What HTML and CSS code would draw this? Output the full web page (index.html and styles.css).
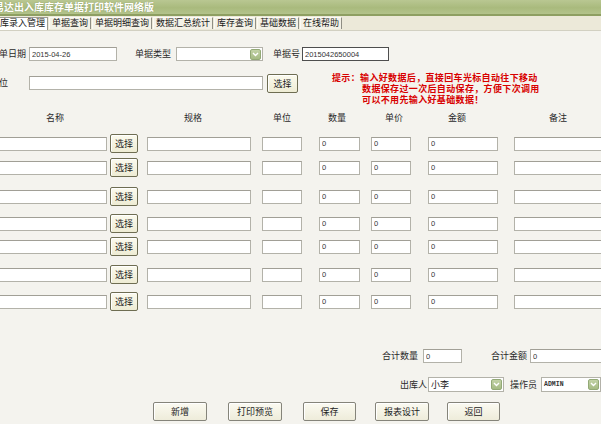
FILE: index.html
```html
<!DOCTYPE html>
<html lang="zh-CN">
<head>
<meta charset="utf-8">
<title>易达出入库库存单据打印软件网络版</title>
<link rel="stylesheet" href="styles.css">
</head>
<body>
<div class="page">
  <div class="titlebar"><span class="title">易达出入库库存单据打印软件网络版</span></div>
  <div class="tabs">
    <span class="tab active">出库录入管理</span>
    <span class="tab">单据查询</span>
    <span class="tab">单据明细查询</span>
    <span class="tab">数据汇总统计</span>
    <span class="tab">库存查询</span>
    <span class="tab">基础数据</span>
    <span class="tab">在线帮助</span>
  </div>

  <div class="content">
    <div class="row-a">
      <span class="lbl lbl-first">开单日期</span>
      <input class="field f-date" type="text" value="2015-04-26">
      <span class="lbl lbl-type">单据类型</span>
      <div class="select s-type"><span class="sel-text"></span><span class="sel-btn"><svg width="7" height="5" viewBox="0 0 7 5"><path d="M1 1 L3.5 3.5 L6 1" stroke="#fff" stroke-width="1.4" fill="none"/></svg></span></div>
      <span class="lbl lbl-no">单据号</span>
      <input class="field f-no" type="text" value="2015042650004">
    </div>

    <div class="row-b">
      <span class="lbl lbl-first lbl-unit">单位</span>
      <input class="field f-unit" type="text" value="">
      <button class="pick pick-top">选择</button>
      <div class="tip">
        <span class="tip-head">提示：</span>
        <div class="tip-lines">
          <div>输入好数据后，直接回车光标自动往下移动</div>
          <div>数据保存过一次后自动保存，方便下次调用</div>
          <div>可以不用先输入好基础数据！</div>
        </div>
      </div>
    </div>

    <div class="grid-head">
      <span class="h h-name">名称</span>
      <span class="h h-spec">规格</span>
      <span class="h h-unit">单位</span>
      <span class="h h-qty">数量</span>
      <span class="h h-price">单价</span>
      <span class="h h-amt">金额</span>
      <span class="h h-note">备注</span>
    </div>

    <div class="items">
      <div class="item"><input class="field c-name"><button class="pick">选择</button><input class="field c-spec"><input class="field c-unit"><input class="field c-qty" value="0"><input class="field c-price" value="0"><input class="field c-amt" value="0"><input class="field c-note"></div>
      <div class="item"><input class="field c-name"><button class="pick">选择</button><input class="field c-spec"><input class="field c-unit"><input class="field c-qty" value="0"><input class="field c-price" value="0"><input class="field c-amt" value="0"><input class="field c-note"></div>
      <div class="item"><input class="field c-name"><button class="pick">选择</button><input class="field c-spec"><input class="field c-unit"><input class="field c-qty" value="0"><input class="field c-price" value="0"><input class="field c-amt" value="0"><input class="field c-note"></div>
      <div class="item"><input class="field c-name"><button class="pick">选择</button><input class="field c-spec"><input class="field c-unit"><input class="field c-qty" value="0"><input class="field c-price" value="0"><input class="field c-amt" value="0"><input class="field c-note"></div>
      <div class="item"><input class="field c-name"><button class="pick">选择</button><input class="field c-spec"><input class="field c-unit"><input class="field c-qty" value="0"><input class="field c-price" value="0"><input class="field c-amt" value="0"><input class="field c-note"></div>
      <div class="item"><input class="field c-name"><button class="pick">选择</button><input class="field c-spec"><input class="field c-unit"><input class="field c-qty" value="0"><input class="field c-price" value="0"><input class="field c-amt" value="0"><input class="field c-note"></div>
      <div class="item"><input class="field c-name"><button class="pick">选择</button><input class="field c-spec"><input class="field c-unit"><input class="field c-qty" value="0"><input class="field c-price" value="0"><input class="field c-amt" value="0"><input class="field c-note"></div>
    </div>

    <div class="totals">
      <span class="lbl">合计数量</span>
      <input class="field t-qty" value="0">
      <span class="lbl lbl-sum">合计金额</span>
      <input class="field t-amt" value="0">
    </div>

    <div class="people">
      <span class="lbl">出库人</span>
      <div class="select s-person"><span class="sel-text cjk">小李</span><span class="sel-btn"><svg width="7" height="5" viewBox="0 0 7 5"><path d="M1 1 L3.5 3.5 L6 1" stroke="#fff" stroke-width="1.4" fill="none"/></svg></span></div>
      <span class="lbl lbl-op">操作员</span>
      <div class="select s-op"><span class="sel-text mono">ADMIN</span><span class="sel-btn"><svg width="7" height="5" viewBox="0 0 7 5"><path d="M1 1 L3.5 3.5 L6 1" stroke="#fff" stroke-width="1.4" fill="none"/></svg></span></div>
    </div>

    <div class="actions">
      <button class="act">新增</button>
      <button class="act">打印预览</button>
      <button class="act">保存</button>
      <button class="act">报表设计</button>
      <button class="act">返回</button>
    </div>
  </div>
</div>
</body>
</html>
```

FILE: styles.css
```css
* { box-sizing: border-box; }

html, body {
  margin: 0;
  padding: 0;
}

body {
  width: 601px;
  height: 424px;
  overflow: hidden;
  background: #f4f3ee;
  font-family: "Noto Sans CJK SC", "Liberation Sans", sans-serif;
  font-size: 9px;
  color: #222;
}

.page {
  width: 601px;
  height: 424px;
  overflow: hidden;
}

/* Title bar */
.titlebar {
  height: 16px;
  background: linear-gradient(#b9c792, #a9ba7d 55%, #b3c38b);
  border-bottom: 2px solid #8e9f62;
  display: flex;
  align-items: center;
}

.title {
  margin-left: -6px;
  color: #fff;
  font-weight: bold;
  font-size: 10px;
  line-height: 12px;
  text-shadow: 0 0 1px #7d8d55;
  white-space: nowrap;
}

/* Tabs */
.tabs {
  height: 15px;
  background: #ece9d9;
  border-bottom: 1px solid #d2d0c2;
  display: flex;
  align-items: flex-end;
  gap: 1px;
}

.tab {
  flex-shrink: 0;
  height: 12px;
  line-height: 10px;
  padding: 0 2px;
  font-size: 9px;
  color: #1a1a1a;
  background: #f3f1e6;
  border-top: 1px solid #fbfaf4;
  border-left: 1px solid #fbfaf4;
  border-right: 1px solid #8f8e84;
  margin-bottom: 1px;
  white-space: nowrap;
}

.tab.active {
  margin-left: -12px;
  background: #fff;
  border: 1px solid #9c9b90;
  border-bottom: none;
  height: 13px;
  margin-bottom: 0;
}

/* Content */
.content {
  width: 601px;
}

.lbl {
  flex-shrink: 0;
  white-space: nowrap;
  font-size: 9px;
  line-height: 12px;
  color: #2a2a2a;
}

.field {
  -webkit-appearance: none;
  appearance: none;
  flex-shrink: 0;
  display: block;
  height: 14px;
  margin: 0;
  padding: 0 2px;
  background: #fff;
  border: 1px solid #b3b2a9;
  border-top-color: #a19f96;
  border-radius: 0;
  font-family: "Liberation Sans", sans-serif;
  font-size: 7.5px;
  color: #333;
  outline: none;
}

.select {
  flex-shrink: 0;
  display: flex;
  align-items: center;
  justify-content: space-between;
  height: 15px;
  background: #fff;
  border: 1px solid #b3b2a9;
  padding: 0 1px 0 2px;
}

.sel-text {
  font-size: 9px;
  line-height: 11px;
  color: #222;
}

.sel-text.mono {
  font-family: "Liberation Mono", monospace;
  font-size: 6.5px;
  font-weight: bold;
  color: #333;
}

.sel-btn {
  width: 11px;
  height: 11px;
  background: linear-gradient(#c2d2a6, #a6bb84);
  border: 1px solid #93a976;
  border-radius: 2px;
  display: flex;
  align-items: center;
  justify-content: center;
}

button {
  -webkit-appearance: none;
  appearance: none;
  margin: 0;
  font-family: "Noto Sans CJK SC", sans-serif;
  font-size: 9px;
  color: #222;
  cursor: default;
}

.pick {
  flex-shrink: 0;
  width: 28px;
  height: 19px;
  padding: 0;
  line-height: 15px;
  background: linear-gradient(#fbfaee, #eeecd4);
  border: 1px solid #6e6d52;
  border-radius: 2px;
  box-shadow: inset 1px 1px 0 #fff;
}

/* Row A */
.row-a {
  display: flex;
  align-items: center;
  margin-top: 16px;
  height: 14px;
}

.lbl-first {
  margin-left: -10px;
  width: 39px;
}

.f-date { width: 88px; }

.lbl-type { margin-left: 18px; width: 36px; }

.s-type { margin-left: 5px; width: 87px; height: 14px; }

.lbl-no { margin-left: 10px; width: 27px; }

.f-no {
  margin-left: 2px;
  width: 87px;
  border: 1px solid #4e4e4e;
}

/* Row B */
.row-b {
  display: flex;
  align-items: flex-start;
  margin-top: 13px;
  height: 29px;
}

.lbl-unit { margin-top: 3px; }

.f-unit {
  width: 234px;
  margin-top: 2px;
}

.pick-top {
  margin-left: 4px;
  width: 31px;
}

.tip {
  flex-shrink: 0;
  display: flex;
  margin-left: 34px;
  margin-top: -2px;
  color: #d80000;
  font-weight: bold;
  font-size: 9px;
  letter-spacing: 0.35px;
  line-height: 11px;
  white-space: nowrap;
}

.tip-lines div:nth-child(n+2) {
  padding-left: 2px;
}

/* Grid header */
.grid-head {
  display: flex;
  margin-top: 9px;
  height: 12px;
  line-height: 12px;
}

.h {
  flex-shrink: 0;
  width: 40px;
  text-align: center;
  font-size: 9px;
  color: #2a2a2a;
}

.h-name { margin-left: 35px; }
.h-spec { margin-left: 98px; }
.h-unit { margin-left: 49px; }
.h-qty { margin-left: 15px; }
.h-price { margin-left: 17px; }
.h-amt { margin-left: 23px; }
.h-note { margin-left: 61px; }

/* Item rows */
.items {
  display: flex;
  flex-direction: column;
  margin-top: 10px;
}

.item {
  display: flex;
  align-items: center;
  height: 19px;
}

.item:nth-child(2) { margin-top: 5px; }
.item:nth-child(3) { margin-top: 10px; }
.item:nth-child(4) { margin-top: 8px; }
.item:nth-child(5) { margin-top: 4px; }
.item:nth-child(6) { margin-top: 9px; }
.item:nth-child(7) { margin-top: 8px; }

.c-name { margin-left: -3px; width: 110px; }
.item .pick { margin-left: 3px; }
.c-spec { margin-left: 9px; width: 104px; }
.c-unit { margin-left: 11px; width: 40px; }
.c-qty { margin-left: 17px; width: 41px; }
.c-price { margin-left: 11px; width: 40px; }
.c-amt { margin-left: 17px; width: 70px; }
.c-note { margin-left: 16px; width: 100px; }

/* Totals */
.totals {
  display: flex;
  align-items: center;
  height: 14px;
  margin-top: 38px;
  padding-left: 382px;
}

.t-qty { margin-left: 5px; width: 39px; }
.lbl-sum { margin-left: 29px; }
.t-amt { margin-left: 3px; width: 80px; }

/* People */
.people {
  display: flex;
  align-items: center;
  height: 15px;
  margin-top: 14px;
  padding-left: 400px;
}

.s-person { margin-left: 1px; width: 76px; }
.lbl-op { margin-left: 6px; }
.s-op { margin-left: 4px; width: 60px; }

/* Actions */
.actions {
  display: flex;
  align-items: center;
  margin-top: 10px;
  padding-left: 153px;
}

.act {
  flex-shrink: 0;
  width: 54px;
  height: 19px;
  padding: 0;
  line-height: 15px;
  background: linear-gradient(#fbfaf1, #eeecda);
  border: 1px solid #85847a;
  border-radius: 2px;
  box-shadow: inset 1px 1px 0 #fff;
}

.act:nth-child(2) { margin-left: 21px; }
.act:nth-child(3) { margin-left: 21px; width: 53px; }
.act:nth-child(4) { margin-left: 19px; }
.act:nth-child(5) { margin-left: 18px; width: 53px; }
```
